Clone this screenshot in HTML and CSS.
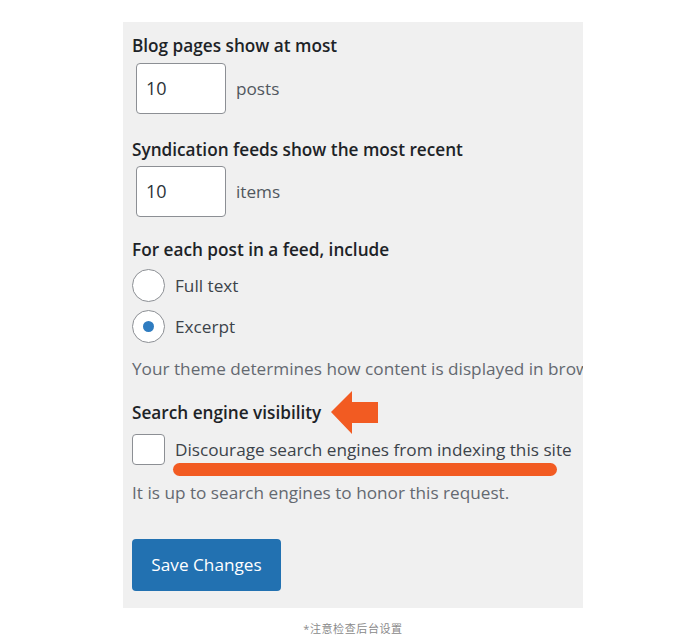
FILE: index.html
```html
<!DOCTYPE html>
<html lang="en">
<head>
<meta charset="utf-8">
<title>Reading Settings</title>
<link rel="stylesheet" href="styles.css">
</head>
<body>
<div class="page">
  <div class="panel">
    <div class="field">
      <div class="heading">Blog pages show at most</div>
      <div class="num-row">
        <div class="num-input">10</div>
        <span class="unit">posts</span>
      </div>
    </div>
    <div class="field f2">
      <div class="heading">Syndication feeds show the most recent</div>
      <div class="num-row">
        <div class="num-input">10</div>
        <span class="unit">items</span>
      </div>
    </div>
    <div class="field f3">
      <div class="heading">For each post in a feed, include</div>
      <div class="radio-row r1"><span class="radio"></span><span class="label">Full text</span></div>
      <div class="radio-row r2"><span class="radio checked"></span><span class="label">Excerpt</span></div>
      <div class="desc d1">Your theme determines how content is displayed in browsers.</div>
    </div>
    <div class="field f4">
      <div class="heading-wrap">
        <span class="heading">Search engine visibility</span>
        <svg class="arrow" width="50" height="44" viewBox="0 0 50 44"><polygon points="0,21 21,0 21,11 47,11 47,32 21,32 21,43" fill="#f25b22"/></svg>
      </div>
      <div class="check-row">
        <span class="checkbox"></span>
        <span class="label">Discourage search engines from indexing this site</span>
        <span class="underline"></span>
      </div>
      <div class="desc d2">It is up to search engines to honor this request.</div>
    </div>
    <div class="btn-wrap"><span class="button">Save Changes</span></div>
  </div>
  <div class="caption">*注意检查后台设置</div>
</div>
</body>
</html>
```

FILE: styles.css
```css
html, body {
  margin: 0;
  padding: 0;
  background: #ffffff;
}
body {
  font-family: "Open Sans", "Noto Sans", "Noto Sans CJK SC", sans-serif;
  color: #1d2327;
}
.page {
  width: 460px;
  margin-left: 123px;
  padding-top: 22px;
}
.panel {
  background: #f0f0f0;
  height: 586px;
  box-sizing: border-box;
  padding: 12px 0 0 9px;
  overflow: hidden;
}
.heading {
  font-size: 17.2px;
  font-weight: 600;
  line-height: 24px;
  color: #1d2327;
  white-space: nowrap;
}
.num-row {
  display: flex;
  align-items: center;
  margin-top: 5px;
  margin-left: 4px;
}
.num-input {
  width: 90px;
  height: 51px;
  box-sizing: border-box;
  border: 1px solid #8c8f94;
  border-radius: 4px;
  background: #fff;
  font-size: 18px;
  line-height: 49px;
  padding-left: 9px;
  color: #2c3338;
}
.unit {
  margin-left: 10px;
  font-size: 17.2px;
  color: #50575e;
}
.f2 { margin-top: 24px; }
.f2 .num-row { margin-top: 4px; }
.f3 { margin-top: 21px; }
.radio-row {
  display: flex;
  align-items: center;
}
.r1 { margin-top: 7px; }
.r2 { margin-top: 8px; }
.radio {
  width: 33px;
  height: 33px;
  box-sizing: border-box;
  border: 1px solid #8c8f94;
  border-radius: 50%;
  background: #fff;
  display: flex;
  align-items: center;
  justify-content: center;
  flex: none;
}
.radio.checked::after {
  content: "";
  width: 11px;
  height: 11px;
  border-radius: 50%;
  background: #2f7cc0;
}
.label {
  margin-left: 10px;
  font-size: 17.2px;
  color: #3c434a;
  white-space: nowrap;
}
.desc {
  font-size: 17.2px;
  line-height: 24px;
  color: #646970;
  white-space: nowrap;
}
.d1 { margin-top: 14px; }
.f4 { margin-top: 20px; }
.heading-wrap {
  display: flex;
  align-items: center;
  height: 24px;
}
.arrow {
  margin-left: 10px;
  flex: none;
}
.check-row {
  position: relative;
  display: flex;
  align-items: center;
  margin-top: 9px;
}
.checkbox {
  width: 33px;
  height: 31px;
  box-sizing: border-box;
  border: 1px solid #8c8f94;
  border-radius: 4px;
  background: #fff;
  flex: none;
}
.underline {
  position: absolute;
  left: 41px;
  top: 29px;
  width: 384px;
  height: 13px;
  border-radius: 7px;
  background: #f25b22;
}
.d2 { margin-top: 16px; }
.btn-wrap {
  margin-top: 34px;
}
.button {
  display: inline-block;
  width: 149px;
  height: 52px;
  box-sizing: border-box;
  background: #2271b1;
  border-radius: 4px;
  color: #fff;
  font-size: 17.2px;
  line-height: 52px;
  text-align: center;
}
.caption {
  text-align: center;
  font-size: 11px;
  color: #8a8a8a;
  margin-top: 12px;
  letter-spacing: 0.6px;
}
```
